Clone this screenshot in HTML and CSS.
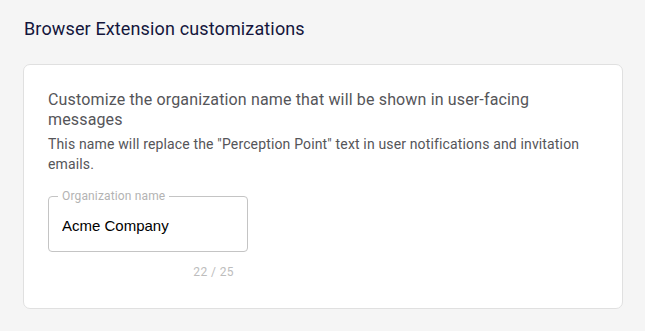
FILE: index.html
```html
<!DOCTYPE html>
<html lang="en">

<head>
    <meta charset="UTF-8">
    <meta name="viewport" content="width=device-width, initial-scale=1.0">
    <title>Browser Extension customizations</title>
    <link rel="stylesheet" href="styles.css">
</head>

<body>
    <h1 class="page-title">Browser Extension customizations</h1>

    <section class="card">
        <h2 class="card-title">Customize the organization name that will be shown in user-facing messages</h2>
        <p class="card-desc">This name will replace the "Perception Point" text in user notifications and invitation emails.</p>

        <div class="field">
            <fieldset class="field-box">
                <legend>Organization name</legend>
                <input type="text" id="orgName" value="Acme Company" maxlength="25">
            </fieldset>
            <p class="field-count"><span id="count">22</span> / 25</p>
        </div>
    </section>
</body>

</html>
```

FILE: styles.css
```css
* {
    margin: 0;
    padding: 0;
    box-sizing: border-box;
    font-family: Roboto, "Liberation Sans", sans-serif;
}

body {
    background: #f5f5f5;
    padding: 17px 22px 0 23px;
}

.page-title {
    font-size: 18px;
    font-weight: 400;
    line-height: 24px;
    letter-spacing: 0.135px;
    color: #14163c;
    padding-left: 1px;
    margin-bottom: 23px;
}

.card {
    background: #ffffff;
    border: 1px solid #e0e0e0;
    border-radius: 7px;
    padding: 25px 24px 26px;
}

.card-title {
    font-size: 16px;
    font-weight: 400;
    line-height: 20px;
    letter-spacing: 0.15px;
    color: #555559;
}

.card-desc {
    font-size: 14px;
    line-height: 20px;
    letter-spacing: 0.15px;
    color: #555559;
    margin-top: 4px;
}

.field {
    width: 200px;
    margin-top: 14px;
}

.field-box {
    border: 1px solid #c4c4c4;
    border-radius: 4px;
    padding: 0 13px;
}

.field-box legend {
    font-size: 12px;
    line-height: 16px;
    letter-spacing: 0.15px;
    color: #b3b3b3;
    padding: 0 4px;
    margin-left: -4px;
}

.field-box input {
    display: block;
    width: 100%;
    height: 47px;
    padding: 4px 0 9px 0;
    border: none;
    outline: none;
    background: transparent;
    font-family: "Liberation Sans", Arial, sans-serif;
    font-size: 15px;
    color: #000000;
}

.field-count {
    font-size: 12px;
    line-height: 20px;
    letter-spacing: 0.4px;
    color: #bdbdbd;
    text-align: right;
    margin: 10px 14px 0;
}
```
